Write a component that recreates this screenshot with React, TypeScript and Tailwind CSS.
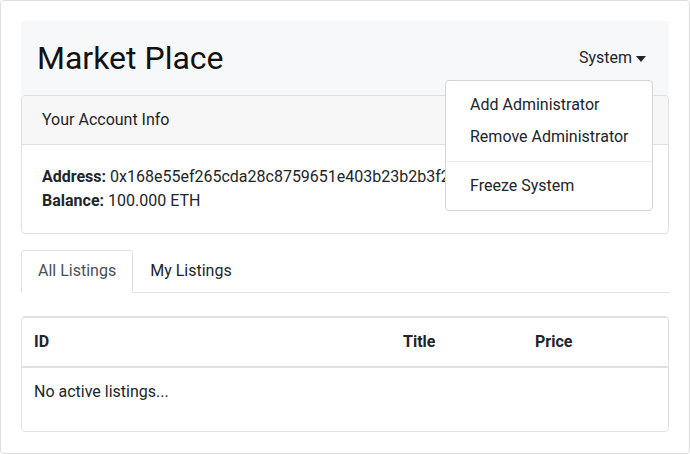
import React from 'react'

const menuItems = ['Add Administrator', 'Remove Administrator']

const App: React.FC = () => {
    return (
        <div className="w-[690px] h-[454px] bg-white border border-[#dedede] rounded-[4px] p-5 font-['Roboto',sans-serif] text-[16px] leading-6 text-[#212529]">

            {/* top bar */}
            <div className="relative h-[74px] bg-[#f7f8f9] flex items-center justify-between pl-4 pr-[23px]">
                <h1 className="text-[32px] leading-none font-normal text-[#111]">Market Place</h1>
                <div className="flex items-center">
                    <span>System</span>
                    <span className="ml-[4px] mt-[1px] w-0 h-0 border-t-[6px] border-x-[5px] border-x-transparent border-t-[#212529]"></span>
                </div>

                <div className="absolute left-[424px] top-[59px] w-[208px] bg-white border border-[#d5d5d5] rounded-[4px] py-2 z-10 whitespace-nowrap">
                    {menuItems.map(item => (
                        <div key={item} className="px-6 py-1">{item}</div>
                    ))}
                    <div className="my-2 border-t border-[#e9ecef]"></div>
                    <div className="px-6 py-1">Freeze System</div>
                </div>
            </div>

            {/* account card */}
            <div className="border border-[#dfdfdf] rounded-[4px]">
                <div className="h-[49px] flex items-center px-5 bg-[#f7f7f7] border-b border-[#dfdfdf] rounded-t-[4px]">
                    Your Account Info
                </div>
                <div className="px-5 pt-5 pb-5">
                    <div className="whitespace-nowrap overflow-hidden"><b className="font-bold">Address:</b> 0x168e55ef265cda28c8759651e403b23b2b3f2</div>
                    <div><b className="font-bold">Balance:</b> 100.000 ETH</div>
                </div>
            </div>

            {/* tabs */}
            <div className="mt-4 flex border-b border-[#dee2e6]">
                <div className="px-4 py-2 -mb-px bg-white border border-[#dee2e6] border-b-white rounded-t-[4px] text-[#495057]">All Listings</div>
                <div className="px-4 py-2 border border-transparent">My Listings</div>
            </div>

            {/* listings table */}
            <div className="mt-[23px] h-[116px] border border-[#dee2e6] rounded-[4px]">
                <div className="grid grid-cols-[369px_132px_1fr] border-t border-b-2 border-[#dee2e6] font-bold">
                    <div className="px-3 py-3">ID</div>
                    <div className="px-3 py-3">Title</div>
                    <div className="px-3 py-3">Price</div>
                </div>
                <div className="px-3 pt-3">No active listings...</div>
            </div>
        </div>
    )
}

export default App
